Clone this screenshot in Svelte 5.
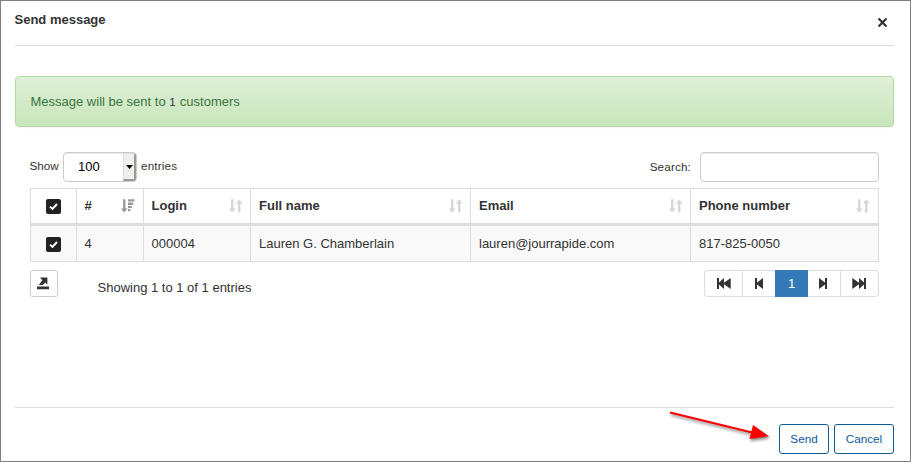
<script>
  const columns = [
    { label: '#', value: '4', width: 67, sorted: true },
    { label: 'Login', value: '000004', width: 107 },
    { label: 'Full name', value: 'Lauren G. Chamberlain', width: 220 },
    { label: 'Email', value: 'lauren@jourrapide.com', width: 220 },
    { label: 'Phone number', value: '817-825-0050', width: 188 }
  ];
</script>

{#snippet check()}
  <svg class="check" width="15" height="15" viewBox="0 0 15 15">
    <rect width="15" height="15" rx="2" fill="#222" />
    <path d="M4 7.6 6.5 10 11 5" fill="none" stroke="#fff" stroke-width="1.9" />
  </svg>
{/snippet}

<div class="modal">
  <header>
    <h1>Send message</h1>
    <button class="close" aria-label="Close">
      <svg width="9" height="9" viewBox="0 0 9 9"><path d="M.5.5 8.5 8.5M8.5.5.5 8.5" stroke="#333" stroke-width="2.2" /></svg>
    </button>
  </header>

  <div class="alert">Message will be sent to <span class="count">1</span> customers</div>

  <main>
    <div class="tools">
      <div class="length">
        <span class="show">Show</span>
        <div class="select"><span>100</span><i><svg width="7" height="4" viewBox="0 0 7 4"><path d="M0 0h7L3.5 4z" /></svg></i></div>
        <span class="entries">entries</span>
      </div>
      <label>Search:<input type="text" /></label>
    </div>

    <table>
      <thead>
        <tr>
          <th class="sel" style="width:46px">{@render check()}</th>
          {#each columns as c}
            <th style="width:{c.width}px">
              <div class="head">
                <span>{c.label}</span>
                {#if c.sorted}
                  <svg class="sorted" width="14" height="14" viewBox="0 0 14 14" fill="#999">
                    <path d="M2.1.3h2.3v9.1h2.1L3.2 13.6 0 9.4h2.1zM7 .2h6.5v2.3H7zM7 3.6h5.2v2.3H7zM7 6.9h3.9v2.2H7zM7 10.1h2.4v2.2H7z" />
                  </svg>
                {:else}
                  <svg width="14" height="14" viewBox="0 0 14 14" fill="#d6d6d6">
                    <path d="M2.1.3h2.3v9.1h2.1L3.2 13.6 0 9.4h2.1zM9.1 13.4h2.3V4.5h2.1L10.2.3 7 4.5h2.1z" />
                  </svg>
                {/if}
              </div>
            </th>
          {/each}
        </tr>
      </thead>
      <tbody>
        <tr>
          <td class="sel">{@render check()}</td>
          {#each columns as c}<td>{c.value}</td>{/each}
        </tr>
      </tbody>
    </table>

    <div class="under">
      <button class="export" aria-label="Export">
        <svg width="12" height="13" viewBox="0 0 12 13" fill="#333">
          <path d="M0 9.4h12v2.9H0zM3 .4h7.4v7.2L8.2 5.6 5.7 8H1.8L5.4 3.2z" />
        </svg>
      </button>
      <span class="info">Showing 1 to 1 of 1 entries</span>
      <nav>
        <button class="wide" aria-label="First"><svg width="14" height="11" viewBox="0 0 14 11"><path d="M0 0h2v4.6L7 0v4.8L13.7 0v11L7 6.2V11L2 6.4V11H0z" /></svg></button>
        <button aria-label="Previous"><svg width="8" height="11" viewBox="0 0 8 11"><path d="M0 0h2v4.6L8 0v11L2 6.4V11H0z" /></svg></button>
        <button class="active">1</button>
        <button aria-label="Next"><svg width="8" height="11" viewBox="0 0 8 11"><path d="M8 0H6v4.6L0 0v11L6 6.4V11h2z" /></svg></button>
        <button class="wide last" aria-label="Last"><svg width="14" height="11" viewBox="0 0 14 11"><path d="M14 0h-2v4.6L7 0v4.8L.3 0v11L7 6.2V11l5-4.6V11h2z" /></svg></button>
      </nav>
    </div>
  </main>

  <footer>
    <button class="send">Send</button>
    <button class="cancel">Cancel</button>
  </footer>

  <svg class="arrow" width="112" height="40" viewBox="0 0 112 40">
    <path d="M6 9.5 88 29.5" stroke="#f00" stroke-width="2.2" />
    <path d="M105 33.2 89 22 85.5 36z" fill="#f00" />
  </svg>
</div>

<style>
  :global(body) { margin: 0; background: #fff; }
  .modal, .modal * { box-sizing: border-box; }
  .modal {
    position: relative;
    display: flex;
    flex-direction: column;
    width: 911px;
    height: 462px;
    padding: 0 16px 0 14px;
    border: 1px solid #7f7f7f;
    background: #fff;
    color: #333;
    font: 13px/18px "Liberation Sans", Arial, sans-serif;
  }
  svg { display: block; }
  button { padding: 0; font: inherit; color: inherit; background: #fff; }
  header {
    display: flex;
    justify-content: space-between;
    height: 45px;
    border-bottom: 1px solid #ddd;
  }
  h1 { margin: 10px 0 0 -.5px; font-size: 13px; line-height: 18px; font-weight: bold; }
  .close { align-self: flex-start; margin: 17px 7px 0 0; border: 0; }
  .alert {
    height: 51px;
    margin-top: 30px;
    padding: 16px 14.5px;
    border: 1px solid #b2dba1;
    border-radius: 4px;
    background: linear-gradient(#dff0d8, #c8e5bc);
    box-shadow: inset 0 1px 0 rgba(255, 255, 255, .25), 0 1px 2px rgba(0, 0, 0, .05);
    color: #3c763d;
  }
  .count { font-size: 11.7px; color: #333; letter-spacing: .5px; }
  main { flex: 1; padding: 25px 15px 0; }
  .tools { display: flex; justify-content: space-between; height: 30px; font-size: 11.7px; }
  .length, label { display: flex; align-items: center; }
  .show { width: 33px; text-indent: -.5px; }
  .entries { margin-left: 4px; }
  .show, .entries { margin-top: -2px; }
  .entries, label { letter-spacing: .15px; }
  .select {
    display: flex;
    justify-content: space-between;
    width: 74px;
    height: 30px;
    border: 1px solid #ccc;
    border-radius: 4px;
    font-size: 13px;
    line-height: 28px;
    color: #000;
    padding-left: 14px;
    overflow: hidden;
    box-shadow: inset 0 1px 1px rgba(0, 0, 0, .075);
  }
  .select i {
    display: flex;
    align-items: center;
    justify-content: center;
    width: 13px;
    background: #f0f0ef;
    border: 1px solid #ddd;
    border-right: 2px solid #999;
    border-bottom: 2px solid #999;
  }
  input {
    width: 179px;
    height: 30px;
    margin-left: 9px;
    border: 1px solid #ccc;
    border-radius: 4px;
    box-shadow: inset 0 1px 1px rgba(0, 0, 0, .075);
  }
  table {
    width: 849px;
    margin-top: 6px;
    table-layout: fixed;
    border-collapse: separate;
    border-spacing: 0;
    border-right: 1px solid #ddd;
  }
  th, td { padding: 0 7px 0 8px; border-left: 1px solid #ddd; text-align: left; }
  th:nth-child(-n+3), td:nth-child(-n+3) { padding: 0 7.5px; }
  th:last-child { padding-right: 8px; }
  th { height: 38px; border-top: 1px solid #ddd; border-bottom: 3px solid #ddd; }
  td { height: 36px; border-bottom: 1px solid #ddd; background: #f9f9f9; }
  th.sel, td.sel { padding: 0 0 0 15px; }
  td .check { position: relative; top: 1px; }
  .head { display: flex; justify-content: space-between; align-items: center; }
  .sorted { margin: -1px 1px 0 0; }
  .under { display: flex; height: 27px; margin-top: 8px; }
  .export {
    display: flex;
    align-items: center;
    justify-content: center;
    width: 28px;
    height: 27px;
    border: 1px solid #ccc;
    border-radius: 3px;
    padding: 0 2px 1px 0;
  }
  .info { margin: 9px auto 0 39.5px; }
  nav { display: flex; }
  nav button {
    display: flex;
    align-items: center;
    justify-content: center;
    width: 33px;
    height: 27px;
    border: 1px solid #ddd;
    border-right: 0;
    padding-right: 1px;
    fill: #333;
  }
  nav .wide { width: 38px; padding: 0 0 0 1px; border-radius: 4px 0 0 4px; }
  nav .last { width: 39px; padding: 0 1px 0 0; border-right: 1px solid #ddd; border-radius: 0 4px 4px 0; }
  nav .active { background: #337ab7; border-color: #337ab7; color: #fff; }
  nav .active + button { width: 32px; border-left-color: #fff; padding-right: 3px; }
  footer {
    display: flex;
    justify-content: flex-end;
    gap: 5px;
    height: 54px;
    padding-top: 16px;
    border-top: 1px solid #ddd;
  }
  footer button {
    height: 30px;
    border: 1px solid #0d5a9c;
    border-radius: 3px;
    color: #0d5a9c;
    font-size: 11.7px;
  }
  .send { width: 50px; }
  .cancel { width: 60px; }
  .arrow {
    position: absolute;
    left: 663px;
    top: 402px;
    filter: drop-shadow(1px 2px 1.5px rgba(0, 0, 0, .5));
  }
</style>
